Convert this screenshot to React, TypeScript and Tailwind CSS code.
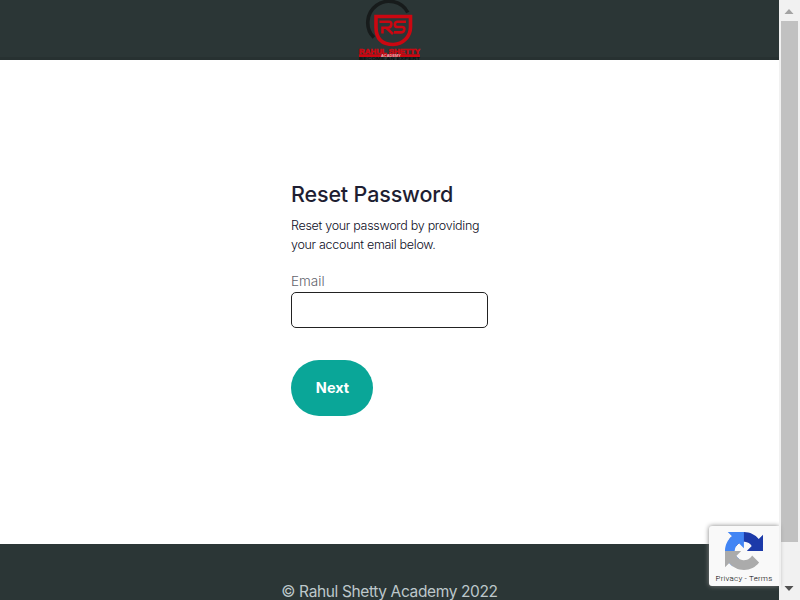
import React from "react";

function AcademyLogo() {
  return (
    <svg width="64" height="60" viewBox="0.5 0 64 60" role="img" aria-label="Rahul Shetty Academy">
      <path d="M16.4 37.6A21.3 21.3 0 1 1 50.3 12.5" fill="none" stroke="#171b1b" strokeWidth="3.6" />
      <path d="M18.5 16.5H53V27A17.4 17.4 0 0 1 35.8 44.5C25 44.5 18.5 39 18.5 27Z" fill="none" stroke="#cb0711" strokeWidth="3.6" />
      <path d="M22 21.8H31.5Q34.3 21.8 33.8 24.8Q33.3 27.8 30.5 27.8H25V33.5M29 28L35.5 34" fill="none" stroke="#cb0711" strokeWidth="2.6" />
      <path d="M48.5 21.8H40Q37.6 21.8 37.4 24.4Q37.4 27 40 27H44.5Q47.2 27 46.8 29.8Q46.3 32.4 43.5 32.4H36.5" fill="none" stroke="#cb0711" strokeWidth="2.6" />
      <text x="1.5" y="53.5" textLength="61" lengthAdjust="spacingAndGlyphs" fontFamily="Liberation Sans, sans-serif" fontWeight="700" fontSize="7.5" fill="#cb0711" stroke="#cb0711" strokeWidth=".6">RAHUL SHETTY</text>
      <rect x="1.5" y="54.3" width="61" height="2.7" fill="#cb0711" />
      <text x="23.5" y="56.8" textLength="20" lengthAdjust="spacingAndGlyphs" fontFamily="Liberation Sans, sans-serif" fontWeight="700" fontSize="3" fill="#e5b2b4">ACADEMY</text>
      <text x="1.5" y="59.8" textLength="61" lengthAdjust="spacingAndGlyphs" fontFamily="Liberation Sans, sans-serif" fontWeight="700" fontSize="3" fill="#0c0f0f">BECOME AN EXPERT</text>
    </svg>
  );
}

function RecaptchaBadge() {
  return (
    <div className="absolute left-[709px] top-[526px] flex h-[60px] w-[70px] flex-col items-center rounded-l-[3px] bg-[#f9f9f9] pt-[6px] shadow-[0_0_5px_gray]">
      <svg width="38" height="38" viewBox="0 0 64 64">
        <path fill="#1c3aa9" d="M64 31.955l-.033-1.37V4.687l-7.16 7.16C50.948 4.674 42.033.093 32.05.093c-10.4 0-19.622 4.96-25.458 12.64l11.736 11.86a15.55 15.55 0 0 1 4.754-5.334c2.05-1.6 4.952-2.906 8.968-2.906.485 0 .86.057 1.135.163 4.976.393 9.288 3.14 11.828 7.124l-8.307 8.307L64 31.953" />
        <path fill="#4285f4" d="M31.862.094l-1.37.033H4.594l7.16 7.16C4.58 13.147 0 22.06 0 32.046c0 10.4 4.96 19.622 12.64 25.458L24.5 45.768a15.55 15.55 0 0 1-5.334-4.754c-1.6-2.05-2.906-4.952-2.906-8.968 0-.485.057-.86.163-1.135.393-4.976 3.14-9.288 7.124-11.828l8.307 8.307L31.86.095" />
        <path fill="#ababab" d="M.001 32.045l.033 1.37v25.898l7.16-7.16c5.86 7.173 14.774 11.754 24.76 11.754 10.4 0 19.622-4.96 25.458-12.64l-11.736-11.86a15.55 15.55 0 0 1-4.754 5.334c-2.05 1.6-4.952 2.906-8.968 2.906-.485 0-.86-.057-1.135-.163-4.976-.393-9.288-3.14-11.828-7.124l8.307-8.307c-10.522.04-22.4.066-27.295-.005" />
      </svg>
      <div className="mt-[4px] whitespace-pre font-['Roboto',sans-serif] text-[8px] font-light leading-[10px] tracking-[0.2px] text-black">Privacy - Terms</div>
    </div>
  );
}

function Scrollbar() {
  return (
    <div className="relative flex h-full w-[21px] shrink-0 flex-col items-center bg-[#f1f1f1]">
      <svg className="block h-[21px] w-[21px] shrink-0" viewBox="0 0 21 21">
        <path d="M5.5 14L10 9L14.5 14Z" fill="#a3a3a3" />
      </svg>
      <div className="h-[521px] w-[17px] bg-[#c1c1c1]" />
      <svg className="mt-auto block h-[21px] w-[21px] shrink-0" viewBox="0 0 21 21">
        <path d="M5.5 7L10 12L14.5 7Z" fill="#505050" />
      </svg>
    </div>
  );
}

export default function App() {
  return (
    <div className="relative flex h-[600px] w-[800px] overflow-hidden bg-white font-['Inter',sans-serif]">
      <div className="flex h-full w-[779px] flex-col">
        <header className="flex h-[60px] shrink-0 justify-center border-b-[3px] border-[#273131] bg-[#2b3636]">
          <div className="h-[60px] w-[64px]"><AcademyLogo /></div>
        </header>
        <main className="flex h-[484px] shrink-0 flex-col items-start pl-[291px] pt-[119px]">
          <h1 className="whitespace-nowrap text-[21.5px] font-medium leading-[30px] tracking-[-0.15px] text-[#1e1e32]">Reset Password</h1>
          <p className="mt-[7px] whitespace-nowrap text-[12.5px] font-light leading-[19px] tracking-[-0.29px] text-[#0c0c24]">
            Reset your password by providing<br />your account email below.
          </p>
          <label className="mb-px mt-[17px] text-[13.5px] font-light leading-5 text-[#63636d]" htmlFor="email">Email</label>
          <input id="email" type="email" className="h-9 w-[197px] rounded-[5px] border border-[#222] bg-white px-2 outline-none" />
          <button className="mt-8 h-14 w-[82px] rounded-[28px] bg-[#0aa698] pl-px text-[14.5px] font-bold text-white">Next</button>
        </main>
        <footer className="flex h-14 shrink-0 justify-center overflow-hidden bg-[#2b3636] pt-9">
          <span className="whitespace-nowrap text-[15.5px] leading-6 tracking-[-0.37px] text-[#bdc8cb]">© Rahul Shetty Academy 2022</span>
        </footer>
      </div>
      <Scrollbar />
      <RecaptchaBadge />
      <div className="absolute left-[779px] top-[515px] h-[85px] w-[2px] bg-[#f1f1f1]" />
    </div>
  );
}
